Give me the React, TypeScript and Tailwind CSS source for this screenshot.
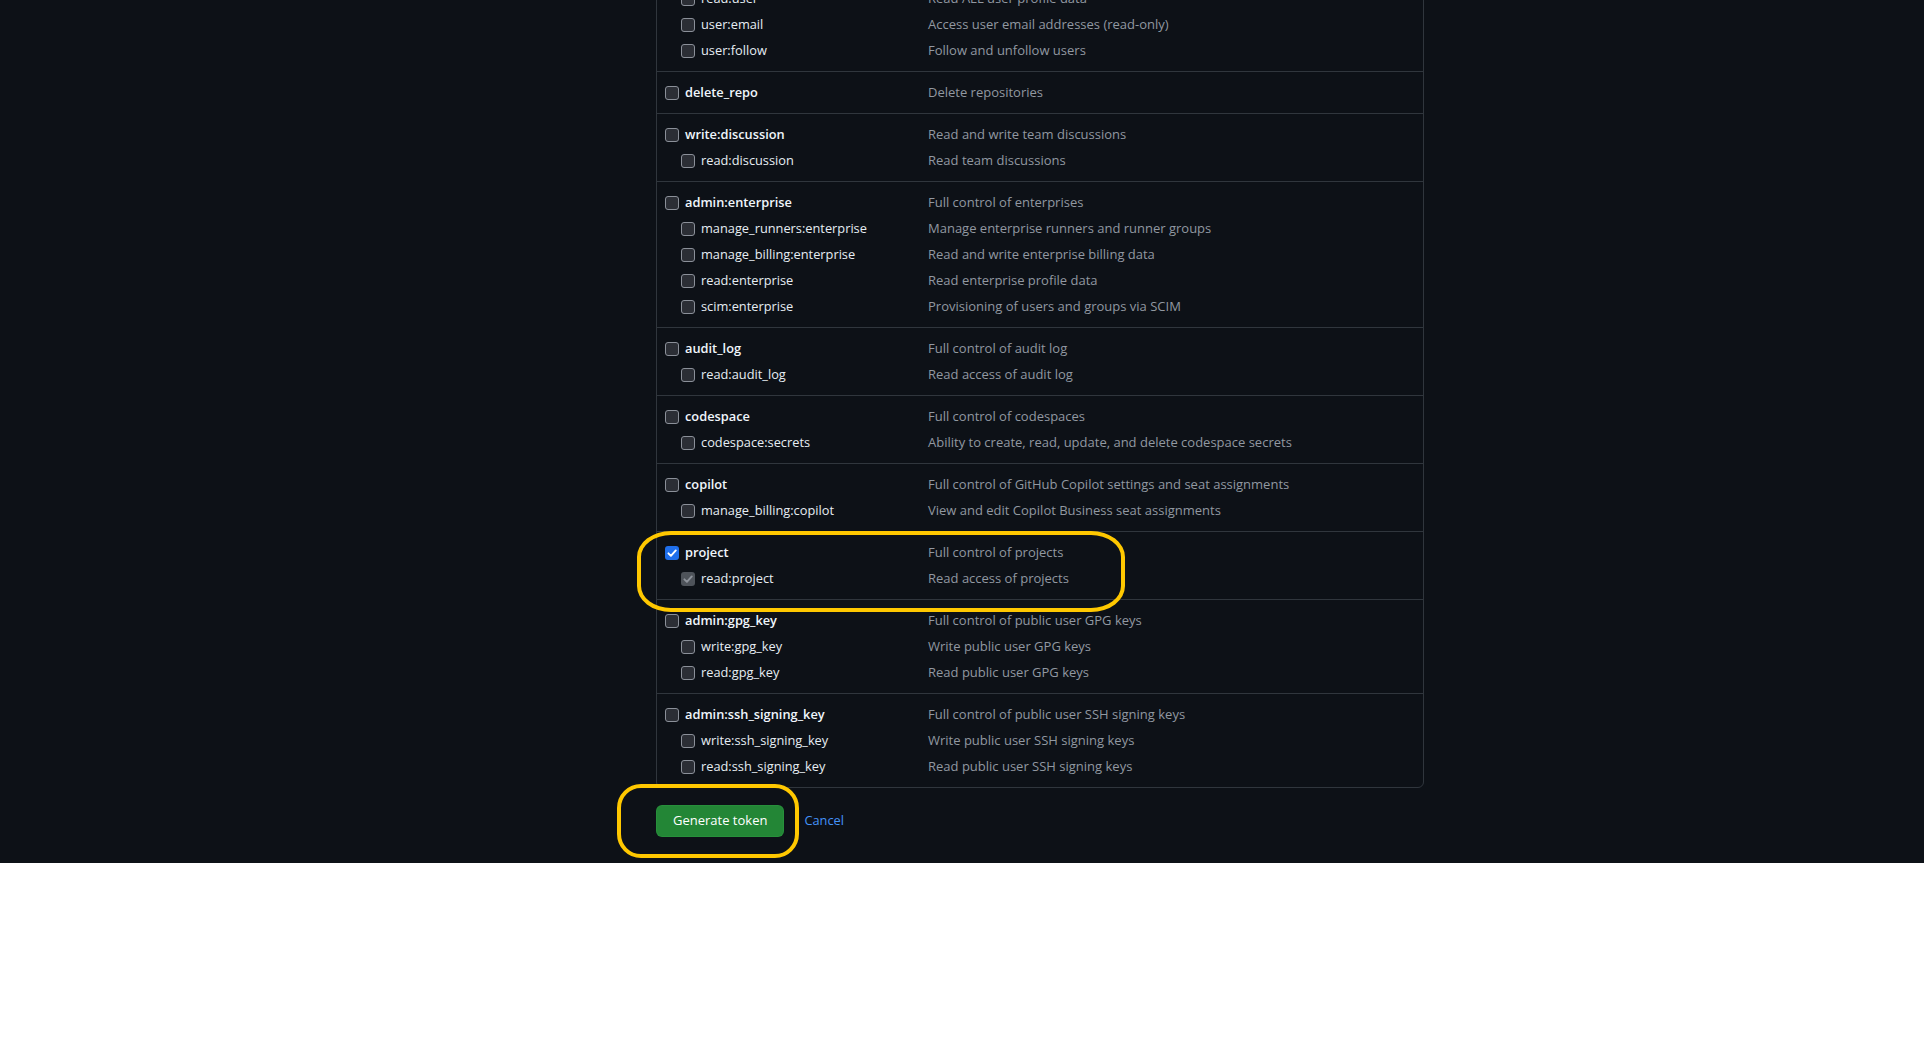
import React from "react";

type Row = { name: string; desc: string; state?: "checked" | "disabled" };
type Group = { parent: Row; children: Row[] };

const groups: Group[] = [
  {
    parent: { name: "user", desc: "Update ALL user data" },
    children: [
      { name: "read:user", desc: "Read ALL user profile data" },
      { name: "user:email", desc: "Access user email addresses (read-only)" },
      { name: "user:follow", desc: "Follow and unfollow users" },
    ],
  },
  { parent: { name: "delete_repo", desc: "Delete repositories" }, children: [] },
  {
    parent: { name: "write:discussion", desc: "Read and write team discussions" },
    children: [{ name: "read:discussion", desc: "Read team discussions" }],
  },
  {
    parent: { name: "admin:enterprise", desc: "Full control of enterprises" },
    children: [
      { name: "manage_runners:enterprise", desc: "Manage enterprise runners and runner groups" },
      { name: "manage_billing:enterprise", desc: "Read and write enterprise billing data" },
      { name: "read:enterprise", desc: "Read enterprise profile data" },
      { name: "scim:enterprise", desc: "Provisioning of users and groups via SCIM" },
    ],
  },
  {
    parent: { name: "audit_log", desc: "Full control of audit log" },
    children: [{ name: "read:audit_log", desc: "Read access of audit log" }],
  },
  {
    parent: { name: "codespace", desc: "Full control of codespaces" },
    children: [
      { name: "codespace:secrets", desc: "Ability to create, read, update, and delete codespace secrets" },
    ],
  },
  {
    parent: { name: "copilot", desc: "Full control of GitHub Copilot settings and seat assignments" },
    children: [{ name: "manage_billing:copilot", desc: "View and edit Copilot Business seat assignments" }],
  },
  {
    parent: { name: "project", desc: "Full control of projects", state: "checked" },
    children: [{ name: "read:project", desc: "Read access of projects", state: "disabled" }],
  },
  {
    parent: { name: "admin:gpg_key", desc: "Full control of public user GPG keys" },
    children: [
      { name: "write:gpg_key", desc: "Write public user GPG keys" },
      { name: "read:gpg_key", desc: "Read public user GPG keys" },
    ],
  },
  {
    parent: { name: "admin:ssh_signing_key", desc: "Full control of public user SSH signing keys" },
    children: [
      { name: "write:ssh_signing_key", desc: "Write public user SSH signing keys" },
      { name: "read:ssh_signing_key", desc: "Read public user SSH signing keys" },
    ],
  },
];

function Box({ state }: { state?: "checked" | "disabled" }) {
  if (state === "checked") {
    return (
      <span className="flex h-[14px] w-[14px] shrink-0 items-center justify-center rounded-[3px] bg-[#1f6feb]">
        <svg width="12" height="12" viewBox="0 0 12 12" fill="none">
          <path d="M2.4 6.3 L4.9 8.8 L9.8 3.4" stroke="#ffffff" strokeWidth="1.9" strokeLinecap="round" strokeLinejoin="round" />
        </svg>
      </span>
    );
  }
  if (state === "disabled") {
    return (
      <span className="flex h-[14px] w-[14px] shrink-0 items-center justify-center rounded-[3px] bg-[#4e535a]">
        <svg width="12" height="12" viewBox="0 0 12 12" fill="none">
          <path d="M2.4 6.3 L4.9 8.8 L9.8 3.4" stroke="#8d929a" strokeWidth="1.9" strokeLinecap="round" strokeLinejoin="round" />
        </svg>
      </span>
    );
  }
  return <span className="h-[14px] w-[14px] shrink-0 rounded-[3px] border border-[#8b9099] bg-[#2b2e35]" />;
}

function ScopeRow({ row, child }: { row: Row; child?: boolean }) {
  return (
    <div className="flex h-[26px] items-center">
      <div className={`flex w-[263px] shrink-0 items-center gap-[6px] ${child ? "pl-4" : ""}`}>
        <Box state={row.state} />
        <span className={child ? "text-[#e6edf3]" : "font-semibold text-[#f0f6fc]"}>{row.name}</span>
      </div>
      <span className="text-[13px] text-[#9198a1]">{row.desc}</span>
    </div>
  );
}

export default function App() {
  return (
    <div
      className="relative h-[863px] w-full overflow-hidden bg-[#0d1117] text-[12.8px]"
      style={{ fontFamily: '"Open Sans", "Noto Sans", "Liberation Sans", sans-serif' }}
    >
      <div className="ml-[656px] mt-[-49px] w-[768px]">
        <div className="rounded-md border border-[#30363d]">
          {groups.map((g, i) => (
            <div key={g.parent.name} className={`pb-[7px] pl-2 pt-2 ${i > 0 ? "border-t border-[#30363d]" : ""}`}>
              <ScopeRow row={g.parent} />
              {g.children.map((c) => (
                <ScopeRow key={c.name} row={c} child />
              ))}
            </div>
          ))}
        </div>
        <div className="mt-[17px] flex items-center">
          <button className="h-[32px] rounded-md border border-[#2ea043]/40 bg-[#238636] px-4 text-[13px] font-normal text-white">
            Generate token
          </button>
          <span className="ml-5 text-[#4493f8]">Cancel</span>
        </div>
      </div>

      <div className="pointer-events-none absolute left-[637px] top-[531px] h-[81px] w-[488px] rounded-[34px/26px] border-4 border-[#ffc800]" />
      <div className="pointer-events-none absolute left-[617px] top-[784px] h-[74px] w-[182px] rounded-[24px] border-4 border-[#ffc800]" />
    </div>
  );
}
